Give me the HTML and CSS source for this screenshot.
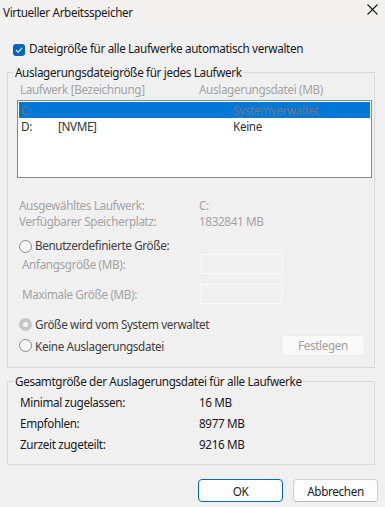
FILE: index.html
```html
<!DOCTYPE html>
<html lang="de">
<head>
<meta charset="utf-8">
<title>Virtueller Arbeitsspeicher</title>
<link rel="stylesheet" href="styles.css">
</head>
<body>
<div class="window">
  <div class="titlebar">
    <span class="title">Virtueller Arbeitsspeicher</span>
    <svg class="close" width="11" height="11" viewBox="0 0 11 11"><path d="M0.5 0.5 L10.5 10.5 M10.5 0.5 L0.5 10.5" stroke="#1a1a1a" stroke-width="1.1" fill="none"/></svg>
  </div>
  <div class="content">
    <div class="check-row">
      <span class="checkbox"><svg width="12" height="12" viewBox="0 0 12 12"><path d="M3.2 6.3 L5.1 8.1 L8.9 4.1" stroke="#fff" stroke-width="1.1" fill="none" stroke-linecap="round" stroke-linejoin="round"/></svg></span>
      <span>Dateigröße für alle Laufwerke automatisch verwalten</span>
    </div>

    <fieldset class="group group-drives">
      <legend>Auslagerungsdateigröße für jedes Laufwerk</legend>
      <div class="cols">
        <span class="col-a">Laufwerk [Bezeichnung]</span>
        <span>Auslagerungsdatei (MB)</span>
      </div>
      <div class="listbox">
        <div class="row selected"><span class="c1">C:</span><span class="c2"></span><span>Systemverwaltet</span></div>
        <div class="row"><span class="c1">D:</span><span class="c2">[NVME]</span><span>Keine</span></div>
      </div>
      <div class="info">
        <div class="kv"><span class="k">Ausgewähltes Laufwerk:</span><span>C:</span></div>
        <div class="kv"><span class="k">Verfügbarer Speicherplatz:</span><span>1832841 MB</span></div>
      </div>
      <div class="radio-row first"><span class="radio"></span><span>Benutzerdefinierte Größe:</span></div>
      <div class="field-row first"><span class="f-label">Anfangsgröße (MB):</span><span class="input"></span></div>
      <div class="field-row second"><span class="f-label">Maximale Größe (MB):</span><span class="input"></span></div>
      <div class="radio-row system"><span class="radio checked"></span><span>Größe wird vom System verwaltet</span></div>
      <div class="radio-row none"><span class="radio"></span><span class="grow">Keine Auslagerungsdatei</span><span class="btn-disabled">Festlegen</span></div>
    </fieldset>

    <fieldset class="group group-total">
      <legend>Gesamtgröße der Auslagerungsdatei für alle Laufwerke</legend>
      <div class="total-row first"><span class="k">Minimal zugelassen:</span><span>16 MB</span></div>
      <div class="total-row"><span class="k">Empfohlen:</span><span>8977 MB</span></div>
      <div class="total-row"><span class="k">Zurzeit zugeteilt:</span><span>9216 MB</span></div>
    </fieldset>

    <div class="buttons">
      <button class="btn primary">OK</button>
      <button class="btn">Abbrechen</button>
    </div>
  </div>
</div>
</body>
</html>
```

FILE: styles.css
```css
* { box-sizing: border-box; }
html, body {
  margin: 0;
  padding: 0;
  background: #f0f0f0;
}
body {
  font-family: "Noto Sans", "Open Sans", sans-serif;
  font-size: 11.7px;
  letter-spacing: -0.35px;
  line-height: 16px;
  color: #1a1a1a;
}
.window {
  width: 385px;
  height: 507px;
  overflow: hidden;
}
.titlebar {
  height: 24px;
  background: #f3f0f0;
  display: flex;
  align-items: center;
  justify-content: space-between;
  padding: 0 7px 0 3px;
}
.title { line-height: 16px; }
.close { margin-bottom: 6px; }

.check-row {
  margin-top: 16px;
  height: 16px;
  display: flex;
  align-items: center;
  padding-left: 13px;
  gap: 4px;
}
.checkbox {
  width: 12px;
  height: 12px;
  border-radius: 3px;
  background: #0067c0;
  display: flex;
  margin-top: 3px;
}

.group {
  border: 1px solid #dadada;
  margin: 0 10px 0 7px;
  padding: 0;
  min-width: 0;
}
.group legend {
  margin-left: 6px;
  padding: 0 1px;
  line-height: 16px;
}
.group-drives { margin-top: 8px; padding-bottom: 11px; }

.cols {
  display: flex;
  margin-top: 1px;
  padding-left: 12px;
  color: #a3a3a3;
}
.col-a { width: 179px; }

.listbox {
  margin: 3px 2px 0 9px;
  height: 78px;
  border: 1px solid #828790;
  background: #fff;
  padding: 1px;
}
.row {
  height: 16px;
  line-height: 16px;
  display: flex;
  padding-left: 2px;
  color: #333;
}
.row.selected {
  background: #0078d7;
  color: #6f7882;
}
.c1 { width: 37px; }
.c2 { width: 175px; }

.info {
  margin-top: 19px;
  padding-left: 11px;
  color: #a3a3a3;
}
.kv { display: flex; height: 16px; line-height: 16px; }
.kv .k { width: 180px; }

.radio-row {
  display: flex;
  align-items: center;
  padding-left: 11px;
  height: 16px;
  color: #404040;
}
.radio-row.first { margin-top: 8px; }
.radio-row.system { margin-top: 12px; }
.radio-row.none { margin-top: 3px; height: 21px; padding-right: 9px; }
.radio {
  width: 13px;
  height: 13px;
  border-radius: 50%;
  border: 1px solid #8a8a8a;
  background: #f6f6f6;
  margin-right: 3px;
  flex: none;
  display: flex;
  align-items: center;
  justify-content: center;
}
.radio-row.first .radio { margin-top: 2px; }
.radio.checked {
  border-color: #c6c6c6;
  background: #c6c6c6;
}
.radio.checked::after {
  content: "";
  width: 5px;
  height: 5px;
  border-radius: 50%;
  background: #f3f3f3;
}
.grow { flex: 1; }
.btn-disabled {
  width: 84px;
  height: 21px;
  line-height: 19px;
  text-align: center;
  border: 1px solid #ebebeb;
  border-radius: 4px;
  background: #f9f9f9;
  color: #a0a0a0;
}

.field-row {
  display: flex;
  align-items: center;
  height: 20px;
  padding-left: 14px;
  color: #a3a3a3;
}
.field-row.first { margin-top: 1px; }
.field-row.second { margin-top: 10px; }
.f-label { width: 178px; }
.input {
  width: 82px;
  height: 20px;
  border: 1px solid #fafafa;
  background: #f0f0f0;
}

.group-total { margin-top: 5px; padding-bottom: 9px; }
.total-row {
  display: flex;
  height: 21px;
  line-height: 21px;
  padding-left: 12px;
}
.total-row.first { margin-top: 3px; }
.total-row .k { width: 179px; }

.buttons {
  margin-top: 14px;
  display: flex;
  justify-content: flex-end;
  gap: 10px;
  padding-right: 7px;
}
.btn {
  width: 85px;
  height: 23px;
  font: inherit;
  letter-spacing: inherit;
  color: #1a1a1a;
  background: #fdfdfd;
  border: 1px solid #d0d0d0;
  border-bottom-color: #b8b8b8;
  border-radius: 4px;
  padding: 0;
}
.btn.primary {
  border: 1px solid #0067c0;
}
```
